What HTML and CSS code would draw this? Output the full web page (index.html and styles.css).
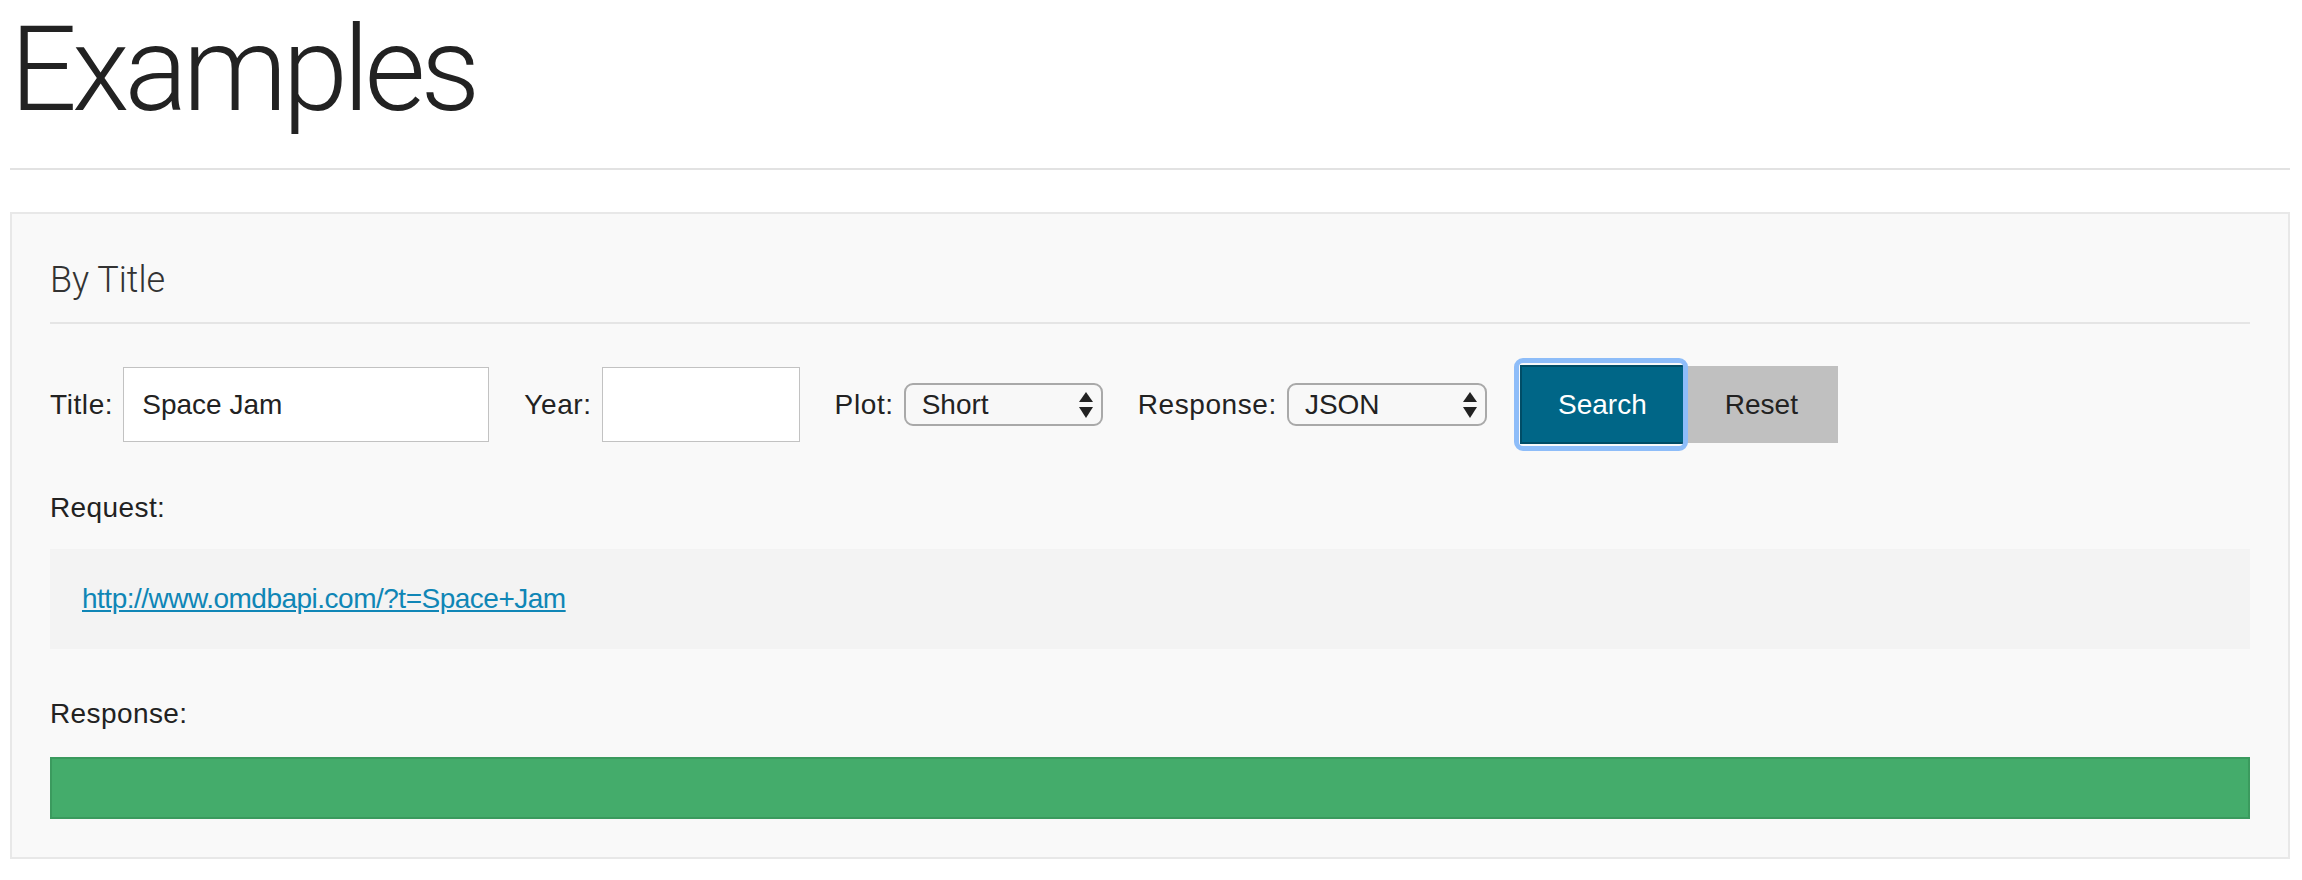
FILE: index.html
```html
<!DOCTYPE html>
<html lang="en">
<head>
<meta charset="utf-8">
<title>Examples</title>
<link rel="stylesheet" href="styles.css">
</head>
<body>
<div class="page">
  <h1 class="page-title">Examples</h1>
  <hr class="page-rule">
  <section class="panel">
    <h2 class="panel-title">By Title</h2>
    <hr class="panel-rule">
    <form class="search-row">
      <label class="field field-title"><span class="field-label">Title:</span><input class="text-input title-input" type="text" value="Space Jam"></label>
      <label class="field field-year"><span class="field-label">Year:</span><input class="text-input year-input" type="text" value=""></label>
      <label class="field field-plot"><span class="field-label">Plot:</span>
        <span class="select-wrap plot-select">
          <select class="select"><option>Short</option><option>Full</option></select>
          <svg class="select-arrows" width="14" height="26" viewBox="0 0 14 26"><polygon points="7,0 14,10 0,10" fill="#222"/><polygon points="0,15 14,15 7,26" fill="#222"/></svg>
        </span>
      </label>
      <label class="field field-response"><span class="field-label">Response:</span>
        <span class="select-wrap response-select">
          <select class="select"><option>JSON</option><option>XML</option></select>
          <svg class="select-arrows" width="14" height="26" viewBox="0 0 14 26"><polygon points="7,0 14,10 0,10" fill="#222"/><polygon points="0,15 14,15 7,26" fill="#222"/></svg>
        </span>
      </label>
      <div class="buttons">
        <button type="button" class="btn btn-search">Search</button>
        <button type="button" class="btn btn-reset">Reset</button>
      </div>
    </form>
    <div class="section-label label-request">Request:</div>
    <div class="request-box"><a class="request-link" href="#">http://www.omdbapi.com/?t=Space+Jam</a></div>
    <div class="section-label label-response">Response:</div>
    <div class="response-bar"></div>
  </section>
</div>
</body>
</html>
```

FILE: styles.css
```css
html, body {
  margin: 0;
  padding: 0;
  background: #ffffff;
}

body {
  font-family: "Liberation Sans", Arial, sans-serif;
  font-size: 28px;
  color: #222222;
}

.page {
  padding: 0 12px 0 10px;
}

.page-title {
  margin: 0 0 0 0;
  font-family: Roboto, "Liberation Sans", sans-serif;
  font-weight: 300;
  font-size: 118px;
  line-height: 140px;
  letter-spacing: -5px;
  color: #222222;
}

.page-rule {
  margin: 28px 0 0 0;
  border: 0;
  height: 2px;
  background: #e2e2e2;
}

.panel {
  margin-top: 42px;
  border: 2px solid #e8e8e8;
  background: #f9f9f9;
  padding: 46px 38px 38px 38px;
}

.panel-title {
  margin: 0;
  font-family: Roboto, "Liberation Sans", sans-serif;
  font-weight: 300;
  font-size: 36px;
  line-height: 40px;
  color: #333333;
}

.panel-rule {
  margin: 22px 0 0 0;
  border: 0;
  height: 2px;
  background: #e5e5e5;
}

.search-row {
  display: flex;
  align-items: center;
  height: 75px;
  margin-top: 43px;
}

.field {
  display: flex;
  align-items: center;
  margin-right: 35px;
}

.field-label {
  margin-right: 10px;
  line-height: 32px;
  letter-spacing: 0.6px;
}

.text-input {
  box-sizing: border-box;
  height: 75px;
  border: 1px solid #c2c2c2;
  background: #ffffff;
  font-family: "Liberation Sans", Arial, sans-serif;
  font-size: 28px;
  color: #222222;
  padding: 0 18px;
  margin: 0;
  outline: none;
}

.title-input {
  width: 366px;
}

.year-input {
  width: 198px;
}

.select-wrap {
  position: relative;
  display: block;
  height: 43px;
}

.plot-select {
  width: 199px;
}

.response-select {
  width: 200px;
}

.select {
  -webkit-appearance: none;
  appearance: none;
  box-sizing: border-box;
  width: 100%;
  height: 43px;
  margin: 0;
  border: 2px solid #a9a9a9;
  border-radius: 9px;
  background: #f8f8f8;
  font-family: "Liberation Sans", Arial, sans-serif;
  font-size: 28px;
  color: #222222;
  padding: 0 0 0 16px;
  outline: none;
}

.select-arrows {
  position: absolute;
  right: 10px;
  top: 9px;
  pointer-events: none;
}

.buttons {
  display: flex;
  align-items: center;
  margin-left: -2px;
}

.btn {
  box-sizing: border-box;
  margin: 0;
  font-family: "Liberation Sans", Arial, sans-serif;
  font-size: 28px;
  cursor: pointer;
}

.btn-search {
  position: relative;
  width: 165px;
  height: 79px;
  background: #006687;
  border: 2px solid #004d67;
  color: #ffffff;
}

.btn-search::before {
  content: "";
  position: absolute;
  left: -8px;
  top: -9px;
  right: -5px;
  bottom: -9px;
  border: 5px solid #8ebdf9;
  border-radius: 9px;
  pointer-events: none;
}

.btn-reset {
  width: 153px;
  height: 77px;
  background: #c0c0c0;
  border: 0;
  color: #222222;
}

.section-label {
  line-height: 32px;
  letter-spacing: 0.4px;
}

.label-request {
  margin-top: 50px;
}

.request-box {
  margin-top: 25px;
  height: 100px;
  background: #f3f3f3;
  padding-left: 32px;
  display: flex;
  align-items: center;
}

.request-link {
  color: #0f86b6;
  text-decoration: underline;
  font-size: 28px;
  letter-spacing: -0.5px;
}

.label-response {
  margin-top: 49px;
}

.response-bar {
  margin-top: 27px;
  box-sizing: border-box;
  height: 62px;
  background: #44ac6b;
  border: 2px solid #3b9a5e;
}
```
